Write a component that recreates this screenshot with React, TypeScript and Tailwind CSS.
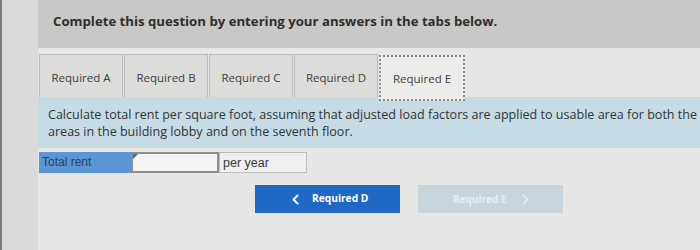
import React from 'react';

const tabs = ['Required A', 'Required B', 'Required C', 'Required D', 'Required E'];

export default function App() {
  return (
    <div className="w-[700px] h-[250px] overflow-hidden bg-[#dadad8] border-l-2 border-[#7a7a7a] flex" style={{ fontFamily: '"Open Sans", sans-serif' }}>
      <div className="w-[36px] shrink-0" />
      <div className="flex-1 flex flex-col bg-[#e6e6e4]">
        <div className="h-[48px] bg-[#c8c8c7] pl-[15px] pt-[12px] text-[13.2px] font-bold text-[#2e2e2e]">
          Complete this question by entering your answers in the tabs below.
        </div>
        <div className="flex items-end h-[49px] pl-[1px]">
          {tabs.map((t, i) =>
            i === 4 ? (
              <div key={t} className="w-[86px] h-[46px] mb-[-4px] border-2 border-dotted border-[#8a8a96] bg-[#ececea] flex items-center justify-center pt-[2px] text-[11.5px] text-[#3f3f3f] relative z-10">
                {t}
              </div>
            ) : (
              <div key={t} className="w-[84px] h-[43px] mr-[1px] border border-[#bcbcbc] border-b-0 bg-[#dcdcdb] flex items-center justify-center pt-[3px] text-[11.5px] text-[#3f3f3f]">
                {t}
              </div>
            )
          )}
        </div>
        <div className="h-[51px] bg-[#c6dce4] pl-[10px] pt-[9px] text-[12.55px] leading-[17px] text-[#333] whitespace-nowrap">
          <div>Calculate total rent per square foot, assuming that adjusted load factors are applied to usable area for both the</div>
          <div>areas in the building lobby and on the seventh floor.</div>
        </div>
        <div className="flex mt-[4px] ml-[1px] h-[21px]" style={{ fontFamily: '"Liberation Sans", Arial, sans-serif' }}>
          <div className="w-[92px] bg-[#5b95d3] text-[#23436a] pl-[3px] leading-[21px] text-[12px]">Total rent</div>
          <div className="w-[88px] bg-[#f4f4f2] border-2 border-[#8e8e8e] relative">
            <span className="absolute left-0 top-0 w-0 h-0 border-t-[5px] border-r-[5px] border-t-[#3a6fb0] border-r-transparent" />
          </div>
          <div className="w-[88px] bg-[#efefed] border border-[#bdbdbd] pl-[3px] leading-[20px] text-[12.5px] text-[#3a3a3a]">per year</div>
        </div>
        <div className="flex mt-[12px] ml-[217px] gap-[18px]">
          <div className="w-[145px] h-[28px] bg-[#2068c5] flex items-center pl-[37px] gap-[13px] text-white text-[10.2px] font-bold">
            <svg width="7" height="11" viewBox="0 0 7 11" fill="none" stroke="white" strokeWidth="2" strokeLinecap="round" strokeLinejoin="round">
              <path d="M5.5 1.5 L1.5 5.5 L5.5 9.5" />
            </svg>
            <span>Required D</span>
          </div>
          <div className="w-[145px] h-[28px] bg-[#c9d5dd] flex items-center pl-[35px] gap-[16px] text-[#e6edf2] text-[10px] font-bold">
            <span>Required E</span>
            <svg width="7" height="11" viewBox="0 0 7 11" fill="none" stroke="#e6edf2" strokeWidth="1.6" strokeLinecap="round" strokeLinejoin="round">
              <path d="M1.5 1.5 L5.5 5.5 L1.5 9.5" />
            </svg>
          </div>
        </div>
      </div>
    </div>
  );
}
